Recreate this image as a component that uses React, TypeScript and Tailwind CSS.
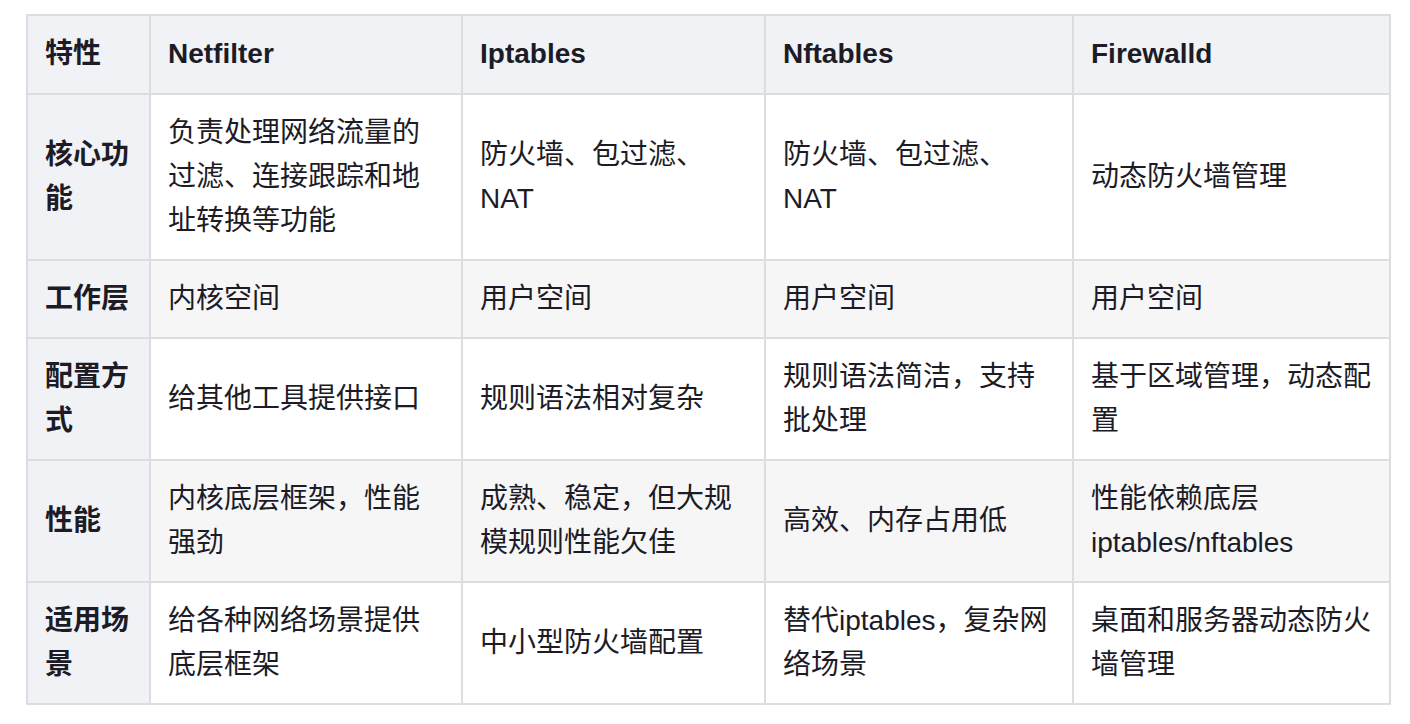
const head = ['特性', 'Netfilter', 'Iptables', 'Nftables', 'Firewalld']

const rows: string[][] = [
  ['核心功能', '负责处理网络流量的过滤、连接跟踪和地址转换等功能', '防火墙、包过滤、NAT', '防火墙、包过滤、NAT', '动态防火墙管理'],
  ['工作层', '内核空间', '用户空间', '用户空间', '用户空间'],
  ['配置方式', '给其他工具提供接口', '规则语法相对复杂', '规则语法简洁，支持批处理', '基于区域管理，动态配置'],
  ['性能', '内核底层框架，性能强劲', '成熟、稳定，但大规模规则性能欠佳', '高效、内存占用低', '性能依赖底层iptables/nftables'],
  ['适用场景', '给各种网络场景提供底层框架', '中小型防火墙配置', '替代iptables，复杂网络场景', '桌面和服务器动态防火墙管理'],
]

export default function App() {
  return (
    <div className="min-h-screen bg-white pt-[14px] pl-[26px] text-[#1c1b26] font-['Liberation_Sans','Noto_Sans_CJK_SC',sans-serif]">
      <table className="table-fixed border-collapse w-[1363px] text-[28px] leading-[44px]">
        <colgroup>
          <col className="w-[123px]" />
          <col className="w-[312px]" />
          <col className="w-[303px]" />
          <col className="w-[308px]" />
          <col className="w-[317px]" />
        </colgroup>
        <thead>
          <tr className="bg-[#f0f2f5] h-[79px]">
            {head.map((h) => (
              <th key={h} className="border-2 border-[#dcdde1] px-[17px] pt-[15px] pb-[17px] text-left font-bold align-middle">
                {h}
              </th>
            ))}
          </tr>
        </thead>
        <tbody>
          {rows.map((r, i) => (
            <tr key={r[0]} className={i % 2 === 1 ? 'bg-[#f6f6f7]' : 'bg-white'}>
              {r.map((c, j) => (
                <td
                  key={j}
                  className={
                    j === 0
                      ? 'border-2 border-[#dcdde1] bg-[#f0f2f5] px-[17px] py-[16px] font-bold align-middle'
                      : 'border-2 border-[#dcdde1] px-[17px] py-[16px] align-middle'
                  }
                >
                  {c}
                </td>
              ))}
            </tr>
          ))}
        </tbody>
      </table>
    </div>
  )
}
